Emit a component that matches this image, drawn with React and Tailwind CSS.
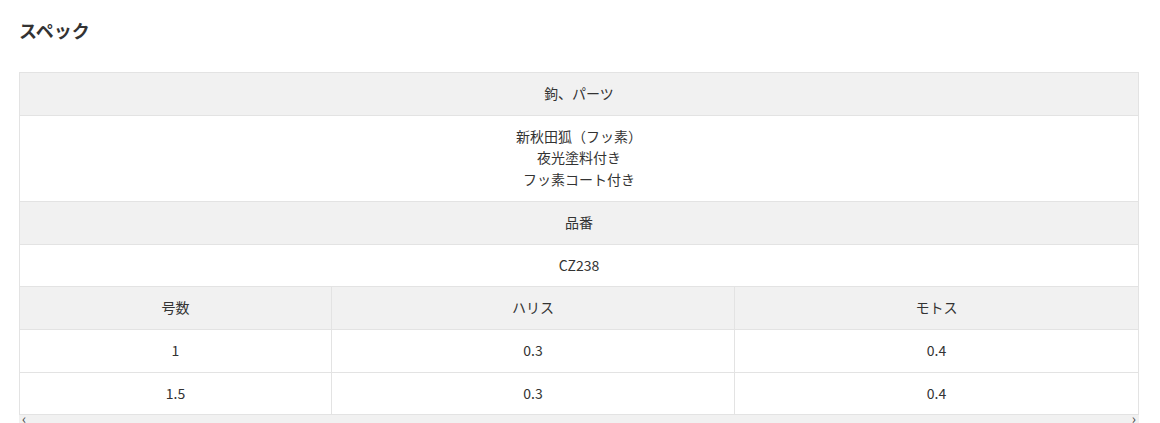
import React from 'react';

const rows = [
  { size: '1', harisu: '0.3', motosu: '0.4' },
  { size: '1.5', harisu: '0.3', motosu: '0.4' },
];

const cell = 'border border-[#e3e3e3] px-3 py-[10px] text-center font-normal';

const App = () => {
  return (
    <div
      className="bg-white text-[#333] px-[19px] pt-[18px]"
      style={{ fontFamily: '"Noto Sans CJK JP", "Noto Sans", sans-serif' }}
    >
      <h2 className="text-[18px] font-bold leading-[24px] text-[#333]">スペック</h2>

      <div className="mt-[30px] w-[1120px] overflow-hidden">
        <table className="w-full border-collapse text-[14px] leading-[21.7px] table-fixed">
          <colgroup>
            <col className="w-[312px]" />
            <col className="w-[403px]" />
            <col />
          </colgroup>
          <tbody>
            <tr className="bg-[#f1f1f1]">
              <th colSpan={3} className={cell}>鉤、パーツ</th>
            </tr>
            <tr>
              <td colSpan={3} className={cell}>
                新秋田狐（フッ素）<br />
                夜光塗料付き<br />
                フッ素コート付き
              </td>
            </tr>
            <tr className="bg-[#f1f1f1]">
              <th colSpan={3} className={cell}>品番</th>
            </tr>
            <tr>
              <td colSpan={3} className={cell}>CZ238</td>
            </tr>
            <tr className="bg-[#f1f1f1]">
              <th className={cell}>号数</th>
              <th className={cell}>ハリス</th>
              <th className={cell}>モトス</th>
            </tr>
            {rows.map((r, idx) => (
              <tr key={idx}>
                <td className={cell}>{r.size}</td>
                <td className={cell}>{r.harisu}</td>
                <td className={cell}>{r.motosu}</td>
              </tr>
            ))}
          </tbody>
        </table>

        {/* horizontal scrollbar strip */}
        <div className="h-[12px] bg-[#f1f1f1] flex items-start justify-between px-[3px] text-[14px] leading-[14px] text-[#444]">
          <span className="-mt-[4px]">‹</span>
          <span className="-mt-[4px]">›</span>
        </div>
      </div>
    </div>
  );
};

export default App;
